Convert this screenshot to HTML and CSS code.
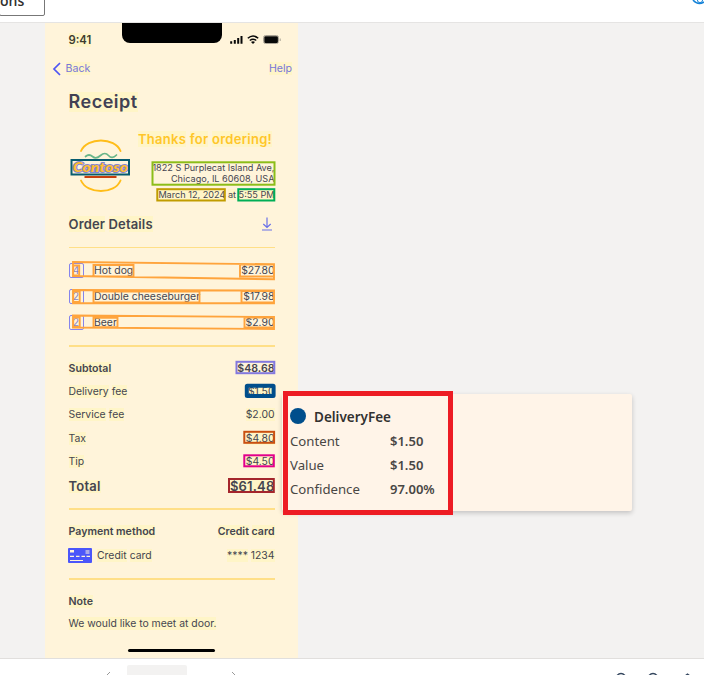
FILE: index.html
```html
<!DOCTYPE html>
<html lang="en">
<head>
<meta charset="utf-8">
<title>Receipt analysis</title>
<link rel="stylesheet" href="styles.css">
</head>
<body>
<header class="topbar">
  <button class="options">ons</button>
  <svg class="topicon" width="16" height="5" viewBox="0 0 16 5"><g fill="none" stroke="#1683d8"><path d="M1 0Q7 7 15 0" stroke-width="1.5"/><circle cx="8" cy="0" r="2.6"/></g></svg>
</header>
<main class="canvas">
  <section class="phone">
    <div class="status">
      <b class="clock"><mark>9:41</mark></b>
      <div class="notch"></div>
      <svg class="signals" width="52" height="12" viewBox="229 34 52 12">
        <path d="M231.2 41.2v2.6M234.8 39.9v3.9M238.2 38v5.8M241.5 36v7.8" stroke="#080808" stroke-width="2"/>
        <g fill="none" stroke="#080808" stroke-width="1.5"><path d="M247.8 38.3Q253 33.7 258.2 38.3"/><path d="M249.8 40.5Q253 37.9 256.2 40.5"/></g>
        <path d="M251 42.1q2-1.5 4 0l-2 2z" fill="#080808"/>
        <rect x="263.5" y="35.5" width="15" height="8" rx="2" fill="none" stroke="#a9a294"/><rect x="264.3" y="36.3" width="13.6" height="6.6" rx="1.2" fill="#080808"/><path d="M280.2 38.5v2.5" stroke="#a9a294"/>
      </svg>
    </div>
    <nav class="nav">
      <span class="back"><svg width="10" height="14" viewBox="0 0 10 14"><path d="M8 1L2 7l6 6" fill="none" stroke="#4e55f4" stroke-width="1.7"/></svg><mark>Back</mark></span>
      <span class="help"><mark>Help</mark></span>
    </nav>
    <h1 class="title"><mark>Receipt</mark></h1>
    <div class="vendor">
      <svg class="logo" width="60" height="56" viewBox="70 137 60 56">
        <g fill="none" stroke-linecap="round" stroke-width="1.9"><path d="M81 151C87 137 115 137 120.500 151M81 180.500C87 194.500 115 194.500 120.500 180.500" stroke="#ffbd19"/><path d="M85.500 156.500q3.500-3 7 0t8-1 8 0 8-.5" stroke="#69b589" stroke-width="1.7"/><path d="M84.500 177h32" stroke="#c93e0d" stroke-linecap="butt" stroke-width="2.200"/></g>
        <text class="brand" x="73" y="171.500" textLength="55" lengthAdjust="spacingAndGlyphs">Contoso</text>
      </svg>
      <div class="order">
        <p class="thanks"><mark>Thanks</mark> <mark>for</mark> <mark>ordering!</mark></p>
        <p class="addr a1">1822 S Purplecat Island Ave,</p>
        <p class="addr a2">Chicago, IL 60608, USA</p>
        <p class="addr date"><mark>March 12, 2024</mark> <mark>at</mark> <mark>5:55 PM</mark></p>
      </div>
    </div>
    <div class="row heading"><span><mark>Order</mark> <mark>Details</mark></span><svg width="12" height="14" viewBox="0 0 12 14"><path d="M6 .5v10M2.300 7L6 10.500 9.700 7M1 13h10" fill="none" stroke="#6970e8" stroke-width="1.200"/></svg></div>
    <hr class="rule thin">
    <div class="items">
      <div class="row item"><span class="qty">4</span><span class="name">Hot dog</span><span class="price">$27.80</span></div>
      <div class="row item"><span class="qty">2</span><span class="name">Double cheeseburger</span><span class="price">$17.98</span></div>
      <div class="row item"><span class="qty">2</span><span class="name">Beer</span><span class="price">$2.90</span></div>
    </div>
    <hr class="rule thin">
    <div class="fees">
      <div class="row strong"><mark>Subtotal</mark><span class="subvalue">$48.68</span></div>
      <div class="row"><span><mark>Delivery</mark> <mark>fee</mark></span><mark class="fee">$1.50</mark></div>
      <div class="row"><span><mark>Service</mark> <mark>fee</mark></span><mark>$2.00</mark></div>
      <div class="row"><mark>Tax</mark><mark>$4.80</mark></div>
      <div class="row"><mark>Tip</mark><mark>$4.50</mark></div>
      <div class="row total"><mark>Total</mark><mark>$61.48</mark></div>
    </div>
    <hr class="rule">
    <div class="payment">
      <div class="row strong"><span><mark>Payment</mark> <mark>method</mark></span><span><mark>Credit</mark> <mark>card</mark></span></div>
      <div class="row"><span class="card"><svg width="24" height="15" viewBox="0 0 24 15"><rect width="24" height="15" rx="1" fill="#4b56fa"/><path d="M2 2h4v2.500H2z" fill="#fff4da"/><path d="M17.500 2h4v4h-4z" fill="#aaa9ea"/><path d="M2 8.300h4m2 0h3.500m2 0H17m1.500 0h3.500M2 12.500h13" stroke="#fff4da" stroke-width="1.200"/></svg><mark>Credit</mark> <mark>card</mark></span><span><mark>****</mark> <mark>1234</mark></span></div>
    </div>
    <hr class="rule">
    <div class="note">
      <div class="row strong"><mark>Note</mark></div>
      <div class="row message"><mark>We would like to meet at door.</mark></div>
    </div>
    <div class="homebar"></div>
    <svg class="annotations" width="253" height="635" viewBox="45 23 253 635" fill="none" stroke-width="2">
      <rect x="71.500" y="160" width="57.500" height="14.500" stroke="#075c70"/>
      <rect x="152.500" y="162.300" width="122" height="22.400" stroke="#8cbd18"/>
      <rect x="157.300" y="189.200" width="67.500" height="11.300" stroke="#c19c00"/>
      <rect x="238.300" y="189.200" width="36" height="11.300" stroke="#00ae56"/>
      <g stroke="#ffa43c" stroke-width="1.900">
        <path d="M73 262l201 2.300v15L73 276zM73.200 265.500h6v10h-6zM93.500 265h40v11.500h-40zM240 264.500h34v12h-34z"/>
        <path d="M73 290l201 .5v12.700H73zM73.200 291.500h6.500v10.500h-6.500zM93.500 291.500h106v11h-106zM241.500 291h32.500v11.500h-32.500z"/>
        <path d="M73 315.500l201 1.500v12L73 327.500zM73.200 317.500h6.500v9.500h-6.500zM93.500 317.800h24v9.500h-24zM244.500 317.500h29.500v10h-29.500z"/>
      </g>
      <rect x="236.500" y="361.800" width="37.800" height="11.400" stroke="#8378de"/>
      <rect x="246.800" y="385.800" width="26.800" height="10.200" rx=".5" stroke="#004e8c" stroke-width="4" stroke-linejoin="round"/>
      <rect x="244.300" y="431.800" width="29.800" height="11" stroke="#ca5010"/>
      <rect x="244.300" y="455.300" width="29.500" height="11" stroke="#e3008c"/>
      <rect x="229" y="479" width="44.800" height="13" stroke="#a4262c"/>
    </svg>
  </section>
  <aside class="popup">
    <div class="details">
      <h2><i class="dot"></i>DeliveryFee</h2>
      <dl><dt>Content</dt><dd>$1.50</dd><dt>Value</dt><dd>$1.50</dd><dt>Confidence</dt><dd>97.00%</dd></dl>
    </div>
  </aside>
</main>
<footer class="pager">
  <svg class="prev" width="6" height="3" viewBox="0 0 6 3"><path d="M5 0L2 3" stroke="#999" fill="none"/></svg>
  <span class="pagebox"></span>
  <svg class="next" width="6" height="3" viewBox="0 0 6 3"><path d="M1 0l3 3" stroke="#999" fill="none"/></svg>
  <svg class="tools" width="90" height="4" viewBox="610 671 90 4"><path d="M616.500 676q4.500-5 9 0M648.500 676q4.500-5 9 0M685 676l2.500-2 2.500 2" fill="none" stroke="#34465e" stroke-width="1.300"/></svg>
</footer>
</body>
</html>
```
FILE: styles.css
```css
* { box-sizing: border-box; }
body { margin: 0; width: 704px; height: 675px; overflow: hidden; background: #fff; display: flex; flex-direction: column; font-family: Inter, sans-serif; color: #45454f; }
p, h1, h2, dl, dd { margin: 0; }
mark { background: #fff5c7; color: inherit; }
.topbar { height: 23px; flex: none; display: flex; justify-content: space-between; border-bottom: 1px solid #e5e4e3; overflow: hidden; }
.options { width: 46px; height: 30px; margin: -14px 0 0 -1px; padding: 0 0 1px; border: 1px solid #777; border-radius: 2px; background: #fff; font: 600 14px/26px "Open Sans", sans-serif; color: #323130; text-align: left; }
.topicon { margin-right: -4px; }
.canvas { height: 635px; flex: none; display: flex; background: #f3f2f1; }
.phone { position: relative; width: 253px; height: 635px; margin-left: 45px; padding: 0 23.5px; background: #fff4da; font-size: 10.4px; line-height: 13px; white-space: nowrap; }
.status { height: 34px; display: flex; align-items: center; margin-right: -8px; }
.clock { width: 53px; font-size: 11.3px; font-weight: 600; color: #3e3d30; }
.notch { width: 100px; height: 20px; background: #000; border-radius: 0 0 8px 8px; align-self: flex-start; }
.signals { margin-left: auto; margin-right: 2px; }
.nav { height: 23px; display: flex; justify-content: space-between; align-items: center; margin: 0 -17.5px 1px -17px; font-size: 10.600px; color: #7777d8; }
.back { display: flex; align-items: center; gap: 4px; }
.title { height: 40px; display: flex; align-items: center; padding-top: 1px; font-size: 18px; font-weight: 600; line-height: 20px; letter-spacing: .5px; color: #414154; }
.vendor { height: 90px; display: flex; justify-content: space-between; }
.logo { margin: 16px 0 0 1.5px; flex: none; }
.brand { font: italic 900 13px Lato, sans-serif; fill: #ffbe2e; stroke: #8584cf; stroke-width: 2px; paint-order: stroke; }
.order { text-align: right; }
.thanks { padding: 9px 2.5px 0 0; font-size: 13px; font-weight: 600; line-height: 18px; letter-spacing: .28px; color: #ffc629; }
.addr { font-size: 9.150px; line-height: 11px; }
.a1 { margin-top: 14px; }
.date { margin-top: 5px; line-height: 12px; }
.row { height: 23.400px; display: flex; justify-content: space-between; align-items: center; }
.heading { height: 26px; font-size: 13px; font-weight: 600; letter-spacing: .15px; }
.heading svg { margin-right: 2px; }
.strong { font-size: 10.600px; font-weight: 600; }
.rule { height: 2px; margin: 0; border: 0; background: #ffdf87; }
.thin { height: 1.500px; }
.heading + .rule { margin-top: 9.500px; }
.items { padding-top: 9px; height: 97px; }
.item { height: 26px; }
.qty { width: 15px; height: 15px; border: 1px solid #8584ec; border-radius: 2px; text-align: center; color: #8582ca; }
.name { margin-left: 10.5px; flex: 1; }
.fees { height: 161.500px; padding-top: 10px; }
.total { height: 26px; font-size: 13px; font-weight: 600; letter-spacing: .2px; }
.payment { height: 68px; padding-top: 9px; }
.payment .row { height: 24px; }
.card { display: flex; align-items: center; gap: 5px; }
.card svg { margin-left: -.5px; }
.card mark + mark { margin-left: -2px; }
.note { height: 69px; padding-top: 10px; }
.note .row { height: 22.500px; }
.homebar { width: 87px; height: 3px; margin-left: 59.5px; border-radius: 2px; background: #000; }
.annotations { position: absolute; left: 0; top: 0; }
.popup { position: relative; width: 350px; height: 117px; margin: 371px 0 0 -16px; background: #fff4e8; border-radius: 2px; box-shadow: 0 2px 5px rgba(0,0,0,.2); font-family: "Noto Sans", sans-serif; font-size: 13.200px; line-height: 24px; color: #484644; }
.details { width: 170px; height: 124px; margin: -3px 0 0 1px; padding: 9px 0 0 2px; border: 5px solid #ed1c24; }
h2 { display: flex; align-items: center; gap: 8px; font-size: 13.500px; font-weight: 600; line-height: 24px; color: #323130; }
.dot { width: 16px; height: 16px; margin-top: -2px; border-radius: 50%; background: #004e8c; }
dl { display: grid; grid-template-columns: 100px 1fr; }
dd { font-weight: 600; font-size: 13px; }
.pager { flex: 1; display: flex; align-items: flex-end; border-top: 1px solid #e1dfdd; }
.prev { margin-left: 105px; }
.pagebox { width: 60px; height: 10px; margin-left: 16px; background: #f3f2f1; border-radius: 2px 2px 0 0; }
.next { margin-left: 44px; }
.tools { margin-left: auto; margin-right: 4px; }
```
